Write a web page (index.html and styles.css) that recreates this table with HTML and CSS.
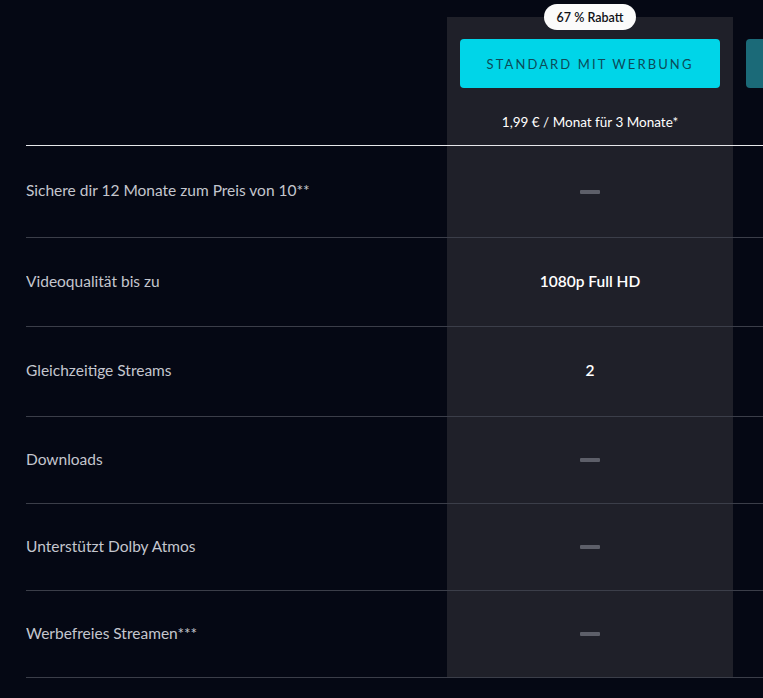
FILE: index.html
```html
<!DOCTYPE html>
<html lang="de">
<head>
<meta charset="utf-8">
<link rel="stylesheet" href="styles.css">
</head>
<body>
<div class="table">
  <div class="row row--head">
    <div class="label"></div>
    <div class="plan plan--active">
      <span class="badge">67 % Rabatt</span>
      <div class="btn">STANDARD MIT WERBUNG</div>
      <div class="price">1,99 € / Monat für 3 Monate*</div>
    </div>
    <div class="plan">
      <div class="btn btn--dim"></div>
    </div>
  </div>
  <div class="row row--h91">
    <div class="label">Sichere dir 12 Monate zum Preis von 10**</div>
    <div class="cell cell--active"><span class="dash"></span></div>
    <div class="cell"></div>
  </div>
  <div class="row row--h88">
    <div class="label">Videoqualität bis zu</div>
    <div class="cell cell--active"><span class="value">1080p Full HD</span></div>
    <div class="cell"></div>
  </div>
  <div class="row row--h89">
    <div class="label">Gleichzeitige Streams</div>
    <div class="cell cell--active"><span class="value">2</span></div>
    <div class="cell"></div>
  </div>
  <div class="row">
    <div class="label">Downloads</div>
    <div class="cell cell--active"><span class="dash"></span></div>
    <div class="cell"></div>
  </div>
  <div class="row">
    <div class="label">Unterstützt Dolby Atmos</div>
    <div class="cell cell--active"><span class="dash"></span></div>
    <div class="cell"></div>
  </div>
  <div class="row">
    <div class="label">Werbefreies Streamen***</div>
    <div class="cell cell--active"><span class="dash"></span></div>
    <div class="cell"></div>
  </div>
</div>
</body>
</html>
```
FILE: styles.css
```css
* { box-sizing: border-box; }
html, body {
  margin: 0;
  padding: 0;
  background: #050814;
  overflow: hidden;
}
body {
  width: 763px;
  height: 698px;
  font-family: Lato, "Open Sans", sans-serif;
  color: #c6c8cf;
}
.table {
  display: flex;
  flex-direction: column;
  margin-left: 26px;
  width: 737px;
  overflow: hidden;
}
.row {
  display: flex;
  height: 87px;
  border-bottom: 1px solid #3b3e49;
}
.row--h91 { height: 92px; }
.row--h88 { height: 89px; }
.row--h89 { height: 90px; }
.row--head {
  height: 146px;
  border-bottom: 1px solid #e6e7ea;
  align-items: flex-end;
}
.label {
  width: 421px;
  flex: none;
  display: flex;
  align-items: center;
  padding-bottom: 3px;
  font-size: 15.5px;
  color: #c4c6ce;
}
.plan {
  width: 286px;
  flex: none;
  height: 128px;
  position: relative;
  padding: 22px 13px 0;
  display: flex;
  flex-direction: column;
  align-items: stretch;
}
.plan--active { background: #1f2029; }
.badge {
  position: absolute;
  top: -13px;
  left: 97px;
  width: 92px;
  height: 26px;
  border-radius: 13px;
  background: #fbfbfb;
  color: #101218;
  font-size: 12.5px;
  font-weight: 600;
  display: flex;
  align-items: center;
  justify-content: center;
}
.btn {
  height: 49px;
  border-radius: 4px;
  background: #00d5e8;
  color: #0c4b58;
  font-size: 13px;
  letter-spacing: 2.1px;
  display: flex;
  align-items: center;
  justify-content: center;
}
.btn--dim { background: #1b6a78; }
.price {
  margin-top: 26px;
  text-align: center;
  font-size: 13.5px;
  color: #ffffff;
}
.cell {
  width: 286px;
  flex: none;
  display: flex;
  align-items: center;
  justify-content: center;
}
.cell--active { background: #1f2029; }
.dash {
  width: 20px;
  height: 4px;
  border-radius: 1px;
  background: #5d5f69;
}
.value {
  font-size: 15.5px;
  font-weight: 600;
  color: #ffffff;
  padding-bottom: 3px;
}
```
